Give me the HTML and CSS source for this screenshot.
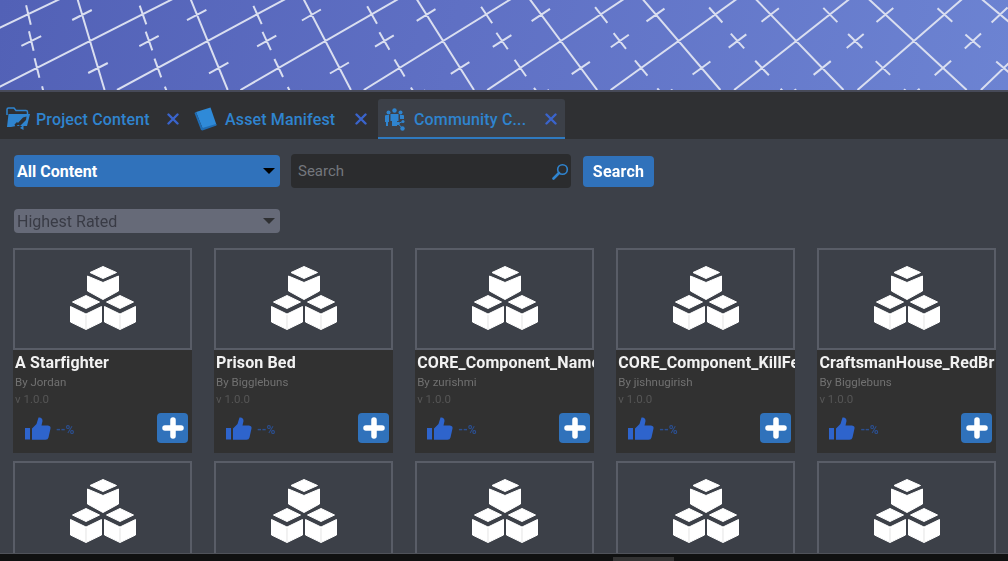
FILE: index.html
```html
<!DOCTYPE html>
<html lang="en">
<head>
    <meta charset="UTF-8">
    <title>Community Content</title>
    <link rel="stylesheet" href="styles.css">
</head>
<body>

<svg class="defs" width="0" height="0">
    <symbol id="cubes" viewBox="0 0 66 66">
        <g fill="#fff" stroke="#fff" stroke-width="1" stroke-linejoin="round">
            <path d="M33 1.500L46.500 7.500L33 13.500L20 7.500Z"/>
            <path d="M17.500 11L33 17.500L48.500 11V26L33 34.500L17.500 26Z"/>
            <path d="M16 30.500L29.500 37L16 43.500L2.500 37Z"/>
            <path d="M.5 41.500L16 49L31.500 41.500V57L16 64.500L.5 57Z"/>
            <path d="M50 30.500L63.500 37L50 43.500L36.500 37Z"/>
            <path d="M34.500 41.500L50 49L65.500 41.500V57L50 64.500L34.500 57Z"/>
        </g>
        <path d="M16 50V64M50 50V64" stroke="#d8d8d8" stroke-width=".7"/>
    </symbol>
    <symbol id="thumb" viewBox="0 0 26 23">
        <path fill="#2e64cc" d="M0 11h5v11.500h-5zM7 11.500L11.500 7L13.500 .5Q17.500 0 17.500 4L16.500 8.500H23Q26 9 25.500 11.500L23.500 20.500Q23 22.800 20.500 22.800H7Z"/>
    </symbol>
    <symbol id="close" viewBox="0 0 12 12">
        <path d="M1.500 1.500L10.500 10.500M10.500 1.500L1.500 10.500" stroke="#3a64cc" stroke-width="2.400" stroke-linecap="round"/>
    </symbol>
    <symbol id="plus" viewBox="0 0 22 22">
        <path d="M11 3V19M3 11H19" stroke="#fff" stroke-width="5.500" stroke-linecap="round"/>
    </symbol>
    <symbol id="arrow" viewBox="0 0 12 6">
        <path d="M0 0H12L6 6Z"/>
    </symbol>
</svg>

<div class="banner">
    <svg id="bannerGrid" class="banner-grid" width="1008" height="90" viewBox="0 0 1008 90"></svg>
</div>

<div class="tabs">
    <div class="tab tab-project">
        <svg class="tab-icon" width="25" height="24" viewBox="0 0 25 24">
            <path d="M1 8V2.500Q1 1 2.500 1H8L10 3.500H20Q21.500 3.500 21.500 5V7" fill="none" stroke="#2f84cf" stroke-width="1.500"/>
            <path fill="#2f84cf" d="M2.500 7H24L21 19H10L5 20H1Z"/>
            <path fill="#2f3033" d="M11 17L17 10.500L20.500 9.500L20 13L14 19Z M8.500 17.500L11 15L13 17L9.500 20Z"/>
            <path fill="#2f84cf" d="M14 21L17.500 18V23Z"/>
        </svg>
        <span class="tab-label">Project Content</span>
        <svg class="tab-close" width="12" height="12"><use href="#close"/></svg>
    </div>
    <div class="tab tab-manifest">
        <svg class="tab-icon" width="23" height="24" viewBox="0 0 23 24">
            <path fill="#2f8ad8" d="M2 5L16.500 .5L22.500 18L9 22.500Z"/>
            <path fill="#1f6cb4" d="M.5 6L2 5L8.500 21L22 17L22.500 18.500L8.500 23.500L7 23Z"/>
        </svg>
        <span class="tab-label">Asset Manifest</span>
        <svg class="tab-close" width="12" height="12"><use href="#close"/></svg>
    </div>
    <div class="tab tab-community">
        <svg class="tab-icon" width="20" height="23" viewBox="0 0 20 23">
            <g fill="#2f84cf">
                <circle cx="9.500" cy="2.500" r="2.200"/>
                <circle cx="3.500" cy="4.500" r="2"/>
                <circle cx="15.500" cy="4.500" r="2"/>
                <path d="M0 8Q0 7 1.500 7H4V14H3V18H1V14H0Z"/>
                <path d="M5.500 6H13.500V13H12V18H7V13H5.500Z"/>
                <path d="M15 7H18Q19 7 19 8V11H15Z"/>
                <circle cx="13" cy="15.500" r="1.700"/>
                <circle cx="18" cy="13.500" r="1.500"/>
                <circle cx="17.500" cy="20.500" r="2.200"/>
            </g>
            <path d="M13 15.500L18 13.500M13 15.500L17.500 20.500" stroke="#2f84cf" stroke-width="1"/>
        </svg>
        <span class="tab-label">Community C...</span>
        <svg class="tab-close" width="12" height="12"><use href="#close"/></svg>
    </div>
</div>

<div class="content">
    <div class="toolbar">
        <div class="select select-type">
            <span>All Content</span>
            <svg class="select-arrow" width="12" height="6"><use href="#arrow"/></svg>
        </div>
        <div class="search-box">
            <span class="search-placeholder">Search</span>
            <svg width="17" height="17" viewBox="0 0 17 17">
                <circle cx="10.500" cy="6.500" r="4.800" fill="none" stroke="#2f84cf" stroke-width="1.600"/>
                <path d="M7 10L1.500 15.500" stroke="#2f84cf" stroke-width="2.600" stroke-linecap="round"/>
            </svg>
        </div>
        <div class="search-btn">Search</div>
    </div>

    <div class="select select-sort">
        <span>Highest Rated</span>
        <svg class="select-arrow" width="12" height="6"><use href="#arrow"/></svg>
    </div>

    <div class="grid">
        <div class="card">
            <div class="thumb"><svg width="66" height="66"><use href="#cubes"/></svg></div>
            <div class="info">
                <div class="title">A Starfighter</div>
                <div class="author">By Jordan</div>
                <div class="version">v 1.0.0</div>
                <div class="actions">
                    <svg class="like" width="26" height="23"><use href="#thumb"/></svg>
                    <span class="rating">--%</span>
                    <div class="add"><svg width="22" height="22"><use href="#plus"/></svg></div>
                </div>
            </div>
        </div>
        <div class="card">
            <div class="thumb"><svg width="66" height="66"><use href="#cubes"/></svg></div>
            <div class="info">
                <div class="title">Prison Bed</div>
                <div class="author">By Bigglebuns</div>
                <div class="version">v 1.0.0</div>
                <div class="actions">
                    <svg class="like" width="26" height="23"><use href="#thumb"/></svg>
                    <span class="rating">--%</span>
                    <div class="add"><svg width="22" height="22"><use href="#plus"/></svg></div>
                </div>
            </div>
        </div>
        <div class="card">
            <div class="thumb"><svg width="66" height="66"><use href="#cubes"/></svg></div>
            <div class="info">
                <div class="title">CORE_Component_Name</div>
                <div class="author">By zurishmi</div>
                <div class="version">v 1.0.0</div>
                <div class="actions">
                    <svg class="like" width="26" height="23"><use href="#thumb"/></svg>
                    <span class="rating">--%</span>
                    <div class="add"><svg width="22" height="22"><use href="#plus"/></svg></div>
                </div>
            </div>
        </div>
        <div class="card">
            <div class="thumb"><svg width="66" height="66"><use href="#cubes"/></svg></div>
            <div class="info">
                <div class="title">CORE_Component_KillFe</div>
                <div class="author">By jishnugirish</div>
                <div class="version">v 1.0.0</div>
                <div class="actions">
                    <svg class="like" width="26" height="23"><use href="#thumb"/></svg>
                    <span class="rating">--%</span>
                    <div class="add"><svg width="22" height="22"><use href="#plus"/></svg></div>
                </div>
            </div>
        </div>
        <div class="card">
            <div class="thumb"><svg width="66" height="66"><use href="#cubes"/></svg></div>
            <div class="info">
                <div class="title">CraftsmanHouse_RedBr</div>
                <div class="author">By Bigglebuns</div>
                <div class="version">v 1.0.0</div>
                <div class="actions">
                    <svg class="like" width="26" height="23"><use href="#thumb"/></svg>
                    <span class="rating">--%</span>
                    <div class="add"><svg width="22" height="22"><use href="#plus"/></svg></div>
                </div>
            </div>
        </div>
        <div class="card"><div class="thumb"><svg width="66" height="66"><use href="#cubes"/></svg></div></div>
        <div class="card"><div class="thumb"><svg width="66" height="66"><use href="#cubes"/></svg></div></div>
        <div class="card"><div class="thumb"><svg width="66" height="66"><use href="#cubes"/></svg></div></div>
        <div class="card"><div class="thumb"><svg width="66" height="66"><use href="#cubes"/></svg></div></div>
        <div class="card"><div class="thumb"><svg width="66" height="66"><use href="#cubes"/></svg></div></div>
    </div>
</div>

<div class="footer"><div class="footer-thumb"></div></div>

<script src="banner.js"></script>
</body>
</html>
```

FILE: styles.css
```css
html, body {
    margin: 0;
    height: 100%;
}

body {
    width: 1008px;
    height: 561px;
    overflow: hidden;
    display: flex;
    flex-direction: column;
    background: #3c4048;
    font-family: Roboto, "Liberation Sans", sans-serif;
    filter: blur(0.4px);
}

.defs {
    display: none;
}

.banner {
    height: 90px;
    flex: none;
    overflow: hidden;
    background: linear-gradient(100deg, #5261b6, #5f70c4 45%, #6c83d2);
}

.banner-grid {
    display: block;
}

.tabs {
    height: 47px;
    flex: none;
    display: flex;
    align-items: flex-end;
    background: #2f3033;
    border-top: 2px solid #474a58;
}

.tab {
    height: 40px;
    display: flex;
    align-items: center;
    box-sizing: border-box;
    padding-top: 2px;
    border-bottom: 2px solid transparent;
    border-radius: 3px 3px 0 0;
}

.tab-project {
    width: 189px;
    padding-left: 6px;
}

.tab-manifest {
    width: 189px;
    padding-left: 5px;
}

.tab-community {
    width: 187px;
    padding-left: 7px;
    background: #3c4048;
    border-bottom-color: #2f7ac0;
}

.tab-icon {
    flex: none;
    margin-right: 5px;
}

.tab-manifest .tab-icon {
    margin-right: 8px;
}

.tab-community .tab-icon {
    margin-right: 9px;
}

.tab-label {
    flex: 1;
    font-size: 16px;
    font-weight: 500;
    letter-spacing: 0.15px;
    color: #2f84cf;
    white-space: nowrap;
}

.tab-close {
    flex: none;
    margin-right: 10px;
}

.tab-manifest .tab-close {
    margin-right: 11px;
}

.tab-community .tab-close {
    margin-right: 8px;
}

.content {
    flex: 1;
    min-height: 0;
    overflow: hidden;
    padding: 15px 0 0 13px;
}

.toolbar {
    display: flex;
    align-items: center;
    height: 34px;
}

.select {
    display: flex;
    align-items: center;
    justify-content: space-between;
    box-sizing: border-box;
    width: 266px;
    margin-left: 1px;
    padding: 0 5px 0 3px;
    border-radius: 4px;
}

.select-type {
    height: 32px;
    background: #3072bb;
    color: #fff;
    font-size: 16px;
    font-weight: 700;
}

.select-sort {
    height: 24px;
    margin-top: 21px;
    background: #666a78;
    color: #393b45;
    font-size: 16px;
}

.select-sort .select-arrow {
    fill: #2f3033;
}

.search-box {
    width: 280px;
    height: 34px;
    margin-left: 11px;
    box-sizing: border-box;
    padding: 0 2px 0 7px;
    display: flex;
    align-items: center;
    justify-content: space-between;
    background: #2b2c2e;
    border-radius: 4px;
}

.search-placeholder {
    font-size: 15px;
    color: #74777d;
}

.search-btn {
    width: 71px;
    height: 31px;
    margin-left: 12px;
    display: flex;
    align-items: center;
    justify-content: center;
    background: #3072bb;
    border-radius: 4px;
    color: #fff;
    font-size: 16px;
    font-weight: 700;
    letter-spacing: 0.2px;
}

.grid {
    display: grid;
    grid-template-columns: repeat(5, 179.1px);
    column-gap: 22px;
    row-gap: 8px;
    margin-top: 15px;
}

.card {
    min-width: 0;
}

.thumb {
    height: 102px;
    box-sizing: border-box;
    display: flex;
    align-items: center;
    justify-content: center;
    border: 2px solid #595d67;
}

.thumb svg {
    display: block;
    margin-top: -3px;
}

.info {
    height: 103px;
    box-sizing: border-box;
    padding: 3px 0 0 2px;
    background: #313131;
}

.title {
    height: 19px;
    overflow: hidden;
    white-space: nowrap;
    font-size: 16px;
    font-weight: 700;
    letter-spacing: 0.12px;
    line-height: 19px;
    color: #f2f2f2;
}

.author {
    margin-top: 3px;
    font-size: 11.5px;
    line-height: 14px;
    color: #717171;
}

.version {
    margin-top: 3px;
    font-size: 11.5px;
    line-height: 14px;
    color: #565656;
}

.actions {
    display: flex;
    align-items: center;
    margin-top: 7px;
    padding: 0 4px 0 10px;
}

.rating {
    margin: 4px 0 0 5px;
    font-size: 12px;
    font-weight: 700;
    color: #2b4f90;
}

.add {
    width: 31px;
    height: 30px;
    margin-left: auto;
    display: flex;
    align-items: center;
    justify-content: center;
    background: #3072bb;
    border-radius: 4px;
}

.footer {
    height: 8px;
    flex: none;
    box-sizing: border-box;
    border-top: 1px solid #50535a;
    background: #101111;
    padding: 3px 0 0 613px;
}

.footer-thumb {
    width: 61px;
    height: 4px;
    background: #333;
}
```

FILE: banner.js
```js
// skewed grid on the banner, the lines lean more towards the right side
var grid = document.getElementById('bannerGrid');
var d = '';

function ascStep(x) {
    return Math.max(53 - (x - 90) * 0.0267, 20);
}

function descStep(x) {
    return Math.max(8 + (x - 90) * 0.0255, 3);
}

function unit(dx, dy, len) {
    var n = Math.sqrt(dx * dx + dy * dy);
    return [dx / n * len, dy / n * len];
}

function line(x1, y1, x2, y2) {
    d += 'M' + x1.toFixed(1) + ' ' + y1.toFixed(1) + 'L' + x2.toFixed(1) + ' ' + y2.toFixed(1);
}

// small cross, one arm along each direction of the grid
function cross(x, y, arms) {
    var a = ascStep(x);
    var c = descStep(x);
    var u = unit(a, -27, 11);
    var v = unit(c, 27, 10);
    if (arms !== 'desc') line(x - u[0], y - u[1], x + u[0], y + u[1]);
    if (arms !== 'asc') line(x - v[0], y - v[1], x + v[0], y + v[1]);
}

for (var i = -2; i < 10; i++) {
    var x = 90 + i * 117.7;
    var a = ascStep(x);
    var c = descStep(x);
    line(x - a * 1.82, 90, x + a * 1.82, -8);
    line(x - c * 1.82, -8, x + c * 1.82, 90);
    cross(x + a, 15, 'desc');
    cross(x - a, 68, 'desc');
    cross(x - c, 15, 'asc');
    cross(x + c, 68, 'asc');

    var free = x + 59;
    cross(free, 41);
    cross(free + descStep(free) * 2.04, 96);
}

var path = document.createElementNS('http://www.w3.org/2000/svg', 'path');
path.setAttribute('d', d);
path.setAttribute('fill', 'none');
path.setAttribute('stroke', '#d9def0');
path.setAttribute('stroke-width', '2');
grid.appendChild(path);
```
